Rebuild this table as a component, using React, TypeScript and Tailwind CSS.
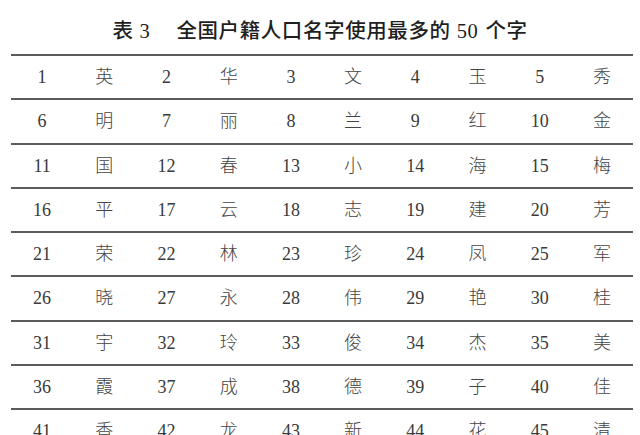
import React from "react";

const chars = [
  "英", "华", "文", "玉", "秀",
  "明", "丽", "兰", "红", "金",
  "国", "春", "小", "海", "梅",
  "平", "云", "志", "建", "芳",
  "荣", "林", "珍", "凤", "军",
  "晓", "永", "伟", "艳", "桂",
  "宇", "玲", "俊", "杰", "美",
  "霞", "成", "德", "子", "佳",
  "香", "龙", "新", "花", "清",
];

const rows: string[][] = [];
for (let i = 0; i < chars.length; i += 5) rows.push(chars.slice(i, i + 5));

export default function App() {
  return (
    <div
      className="w-[640px] h-[435px] overflow-hidden bg-white text-[#3a3a3a]"
      style={{ fontFamily: '"Liberation Serif", "Noto Sans CJK SC", serif' }}
    >
      <div className="h-[54px] pt-[9px] flex items-center justify-center text-[20.5px] font-medium text-[#1f1f1f] tracking-[0.6px]">
        <span>表</span>
        <span className="ml-[6px] font-normal">3</span>
        <span className="ml-[26px]">全国户籍人口名字使用最多的</span>
        <span className="ml-[6px] font-normal">50</span>
        <span className="ml-[7px]">个字</span>
      </div>
      <div className="mx-[11px] w-[622px] border-t-[2px] border-[#5c5c5c]">
        {rows.map((r, ri) => (
          <div
            key={ri}
            className="grid grid-cols-10 h-[44.25px] border-b-[2px] border-[#5c5c5c] items-center text-center"
          >
            {r.map((c, ci) => {
              const n = ri * 5 + ci + 1;
              return (
                <React.Fragment key={ci}>
                  <span className="text-[18px] leading-none">{n}</span>
                  <span className="text-[18px] leading-none font-light text-[#444]">{c}</span>
                </React.Fragment>
              );
            })}
          </div>
        ))}
      </div>
    </div>
  );
}
